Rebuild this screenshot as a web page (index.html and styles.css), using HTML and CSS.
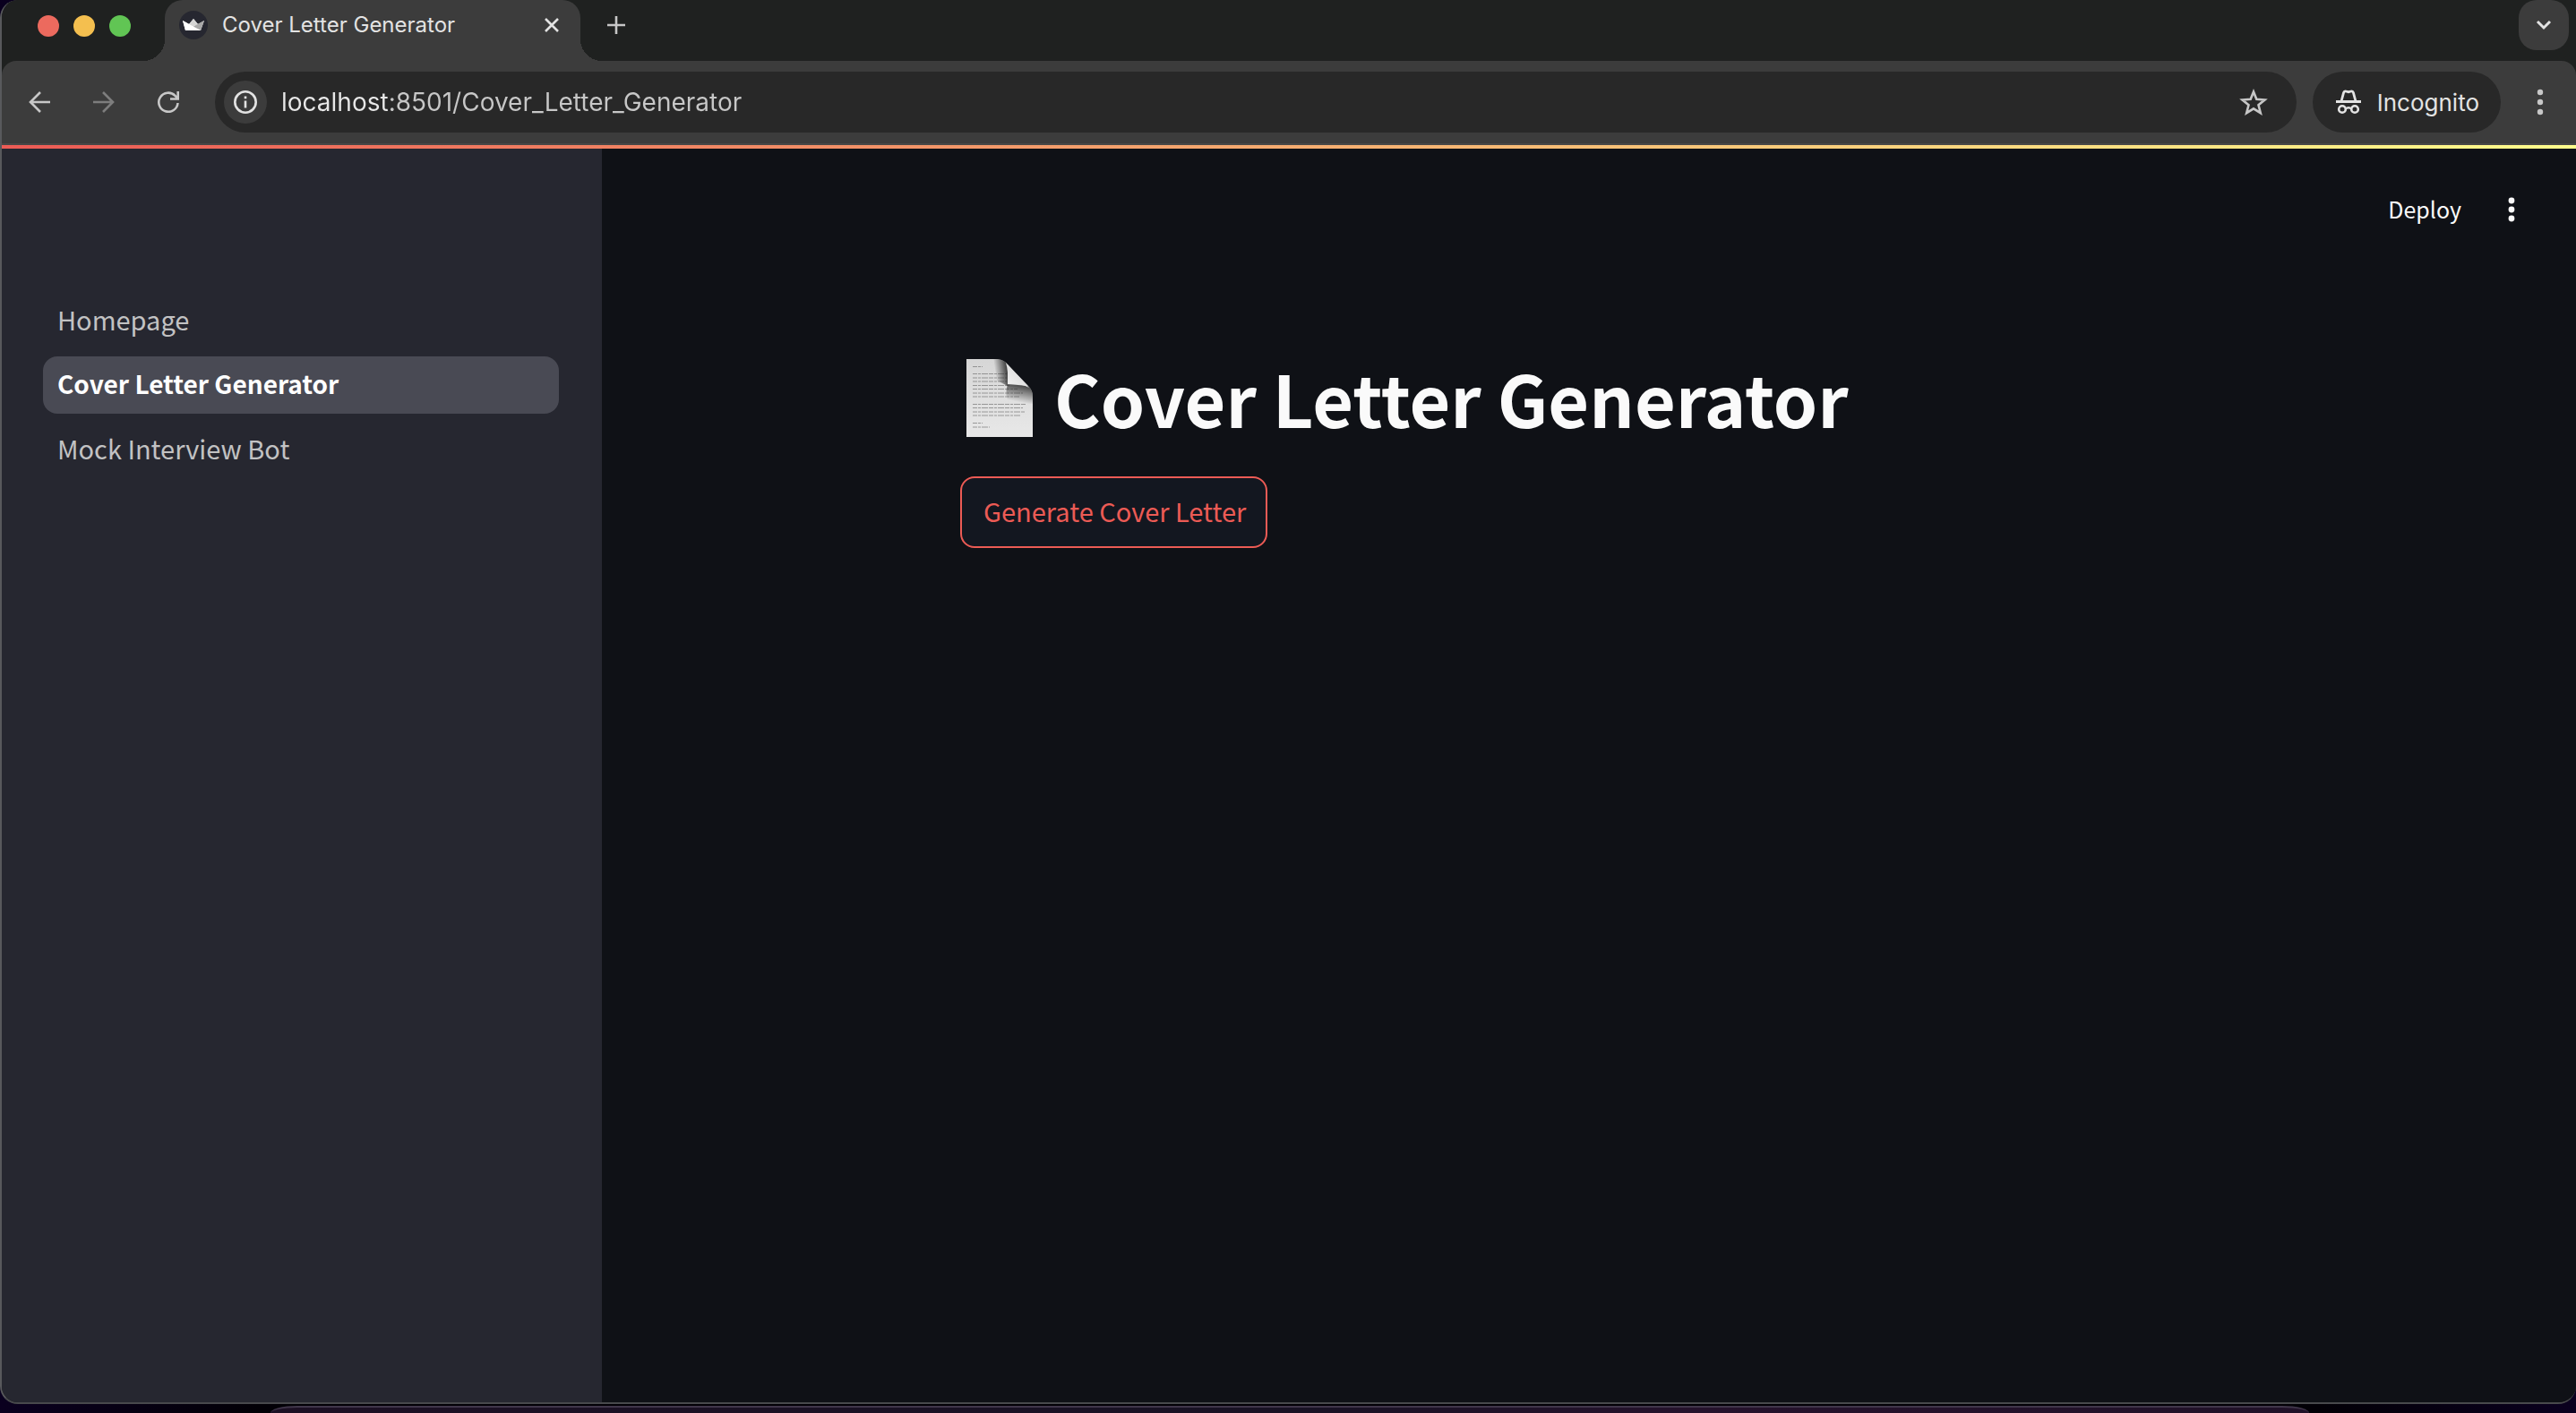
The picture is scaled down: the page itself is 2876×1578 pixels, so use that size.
FILE: index.html
```html
<!DOCTYPE html>
<html lang="en">
<head>
<meta charset="utf-8">
<title>Cover Letter Generator</title>
<link rel="stylesheet" href="styles.css">
</head>
<body>
<div class="window">
  <header class="tabstrip">
    <div class="lights">
      <span class="light light-close"></span>
      <span class="light light-min"></span>
      <span class="light light-max"></span>
    </div>
    <div class="tab">
      <svg class="favicon" viewBox="0 0 32 32" aria-hidden="true">
        <circle cx="16" cy="16" r="16" fill="#262730"/>
        <path d="M4 11l7 4 5-6 5 6 7-4-4 11H7z" fill="#fff"/>
        <path d="M16 9l5 6-7 3-3-3z" fill="#d5d5d5"/>
        <path d="M28 11l-13 7 9 4z" fill="#a8a8a8"/>
        <path d="M4 11l20 11H7z" fill="#fff"/>
      </svg>
      <span class="tab-title">Cover Letter Generator</span>
      <button class="icon-button tab-close" aria-label="Close tab">
        <svg width="16" height="16" viewBox="0 0 16 16"><path d="M1 1l14 14M15 1L1 15" stroke="#e3e3e3" stroke-width="2.6"/></svg>
      </button>
    </div>
    <button class="icon-button new-tab" aria-label="New tab">
      <svg width="20" height="20" viewBox="0 0 20 20"><path d="M10 0v20M0 10h20" stroke="#c7c7c7" stroke-width="2.6"/></svg>
    </button>
    <button class="icon-button tab-search" aria-label="Search tabs">
      <svg width="18" height="12" viewBox="0 0 18 12"><path d="M2 2l7 7 7-7" fill="none" stroke="#e3e3e3" stroke-width="3"/></svg>
    </button>
  </header>

  <div class="toolbar">
    <div class="nav-buttons">
      <button class="icon-button" aria-label="Back">
        <svg width="24" height="24" viewBox="0 0 24 24"><path d="M24 12H2M13 1L2 12l11 11" fill="none" stroke="#c7c7c7" stroke-width="2.6"/></svg>
      </button>
      <button class="icon-button" aria-label="Forward">
        <svg width="24" height="24" viewBox="0 0 24 24"><path d="M0 12h22M11 1l11 11-11 11" fill="none" stroke="#7d7d7d" stroke-width="2.6"/></svg>
      </button>
      <button class="icon-button" aria-label="Reload">
        <svg width="24" height="24" viewBox="0 0 24 24"><path d="M22.500 13A10.600 10.600 0 1 1 19.500 4.800L22.500 8M22.700 0v8.500h-8.700" fill="none" stroke="#c7c7c7" stroke-width="2.6"/></svg>
      </button>
    </div>
    <div class="address">
      <button class="icon-button site-info" aria-label="Site information">
        <svg width="26" height="26" viewBox="0 0 26 26"><circle cx="13" cy="13" r="11.700" fill="none" stroke="#e3e3e3" stroke-width="2.600"/><path d="M13 11.500v8M13 6.500v2.700" stroke="#e3e3e3" stroke-width="2.600"/></svg>
      </button>
      <input class="url" type="text" aria-label="Address" value="localhost:8501/Cover_Letter_Generator">
      <button class="icon-button bookmark" aria-label="Bookmark this page">
        <svg width="32" height="30" viewBox="0 0 32 30"><path d="M16 3.500l3.300 8.300 9.200.7-7 5.700 2.300 9-7.800-4.900-7.800 4.900 2.300-9-7-5.700 9.200-.7z" fill="none" stroke="#c7c7c7" stroke-width="2.600"/></svg>
      </button>
    </div>
    <button class="incognito">
      <svg width="28" height="28" viewBox="0 0 28 28" aria-hidden="true">
        <path d="M0 13.500h28" stroke="#e3e3e3" stroke-width="3"/>
        <path d="M6 13l2.600-9.500Q9.200 1.500 11.200 2L14 2.700 16.800 2Q18.800 1.500 19.400 3.500L22 13" fill="none" stroke="#e3e3e3" stroke-width="2.800"/>
        <circle cx="7" cy="22" r="3.800" fill="none" stroke="#e3e3e3" stroke-width="2.600"/>
        <circle cx="21" cy="22" r="3.800" fill="none" stroke="#e3e3e3" stroke-width="2.600"/>
        <path d="M10.500 21.500Q14 19 17.500 21.500" fill="none" stroke="#e3e3e3" stroke-width="2.600"/>
      </svg>
      <span>Incognito</span>
    </button>
    <button class="icon-button browser-menu" aria-label="Browser menu">
      <svg width="8" height="30" viewBox="0 0 8 30" fill="#c7c7c7"><circle cx="4" cy="4" r="3.200"/><circle cx="4" cy="15" r="3.200"/><circle cx="4" cy="26" r="3.200"/></svg>
    </button>
  </div>

  <div class="decoration"></div>

  <div class="app">
    <nav class="sidebar" aria-label="Pages">
      <a class="page-link" href="#home">Homepage</a>
      <a class="page-link page-link-active" href="#cover" aria-current="page">Cover Letter Generator</a>
      <a class="page-link" href="#mock">Mock Interview Bot</a>
    </nav>
    <main class="main">
      <div class="app-bar">
        <button class="deploy">Deploy</button>
        <button class="icon-button app-menu" aria-label="App menu">
          <svg width="8" height="28" viewBox="0 0 8 28" fill="#fafafa"><circle cx="4" cy="4" r="3.400"/><circle cx="4" cy="14" r="3.400"/><circle cx="4" cy="24" r="3.400"/></svg>
        </button>
      </div>
      <div class="content">
        <h1 class="title">
          <svg class="page-icon" width="74" height="87" viewBox="0 0 74 87" aria-hidden="true">
            <defs>
              <linearGradient id="paper" x1="0" y1="0" x2="0" y2="1"><stop offset="0" stop-color="#d6d6d6"/><stop offset="1" stop-color="#e8e8e8"/></linearGradient>
              <linearGradient id="curl" x1="0" y1="1" x2="1" y2="0"><stop offset="0" stop-color="#f4f4f4"/><stop offset=".5" stop-color="#e2e2e2"/><stop offset="1" stop-color="#aaa"/></linearGradient>
              <linearGradient id="shade-left" gradientUnits="userSpaceOnUse" x1="46" y1="14" x2="32" y2="16"><stop offset="0" stop-color="#222" stop-opacity=".85"/><stop offset="1" stop-color="#222" stop-opacity="0"/></linearGradient>
              <linearGradient id="shade-below" gradientUnits="userSpaceOnUse" x1="62" y1="28" x2="58" y2="48"><stop offset="0" stop-color="#222" stop-opacity=".85"/><stop offset="1" stop-color="#222" stop-opacity="0"/></linearGradient>
              <path id="sheet" d="M0 0h35Q42 1 46 6L69 30Q74 35 74 42V87H0z"/>
            </defs>
            <use href="#sheet" fill="url(#paper)"/>
            <g stroke="#666" stroke-width="1" stroke-dasharray="5 1 3 1 7 1" opacity=".6">
              <path d="M7 8.500h11M7 16.500h38M7 21h38M7 25h38M7 29.500h42M7 33.500h50M7 38h56M7 42h52M7 50.500h59M7 54.500h56M7 59h58M7 63h54M7 71.500h11M7 76h19"/>
            </g>
            <path d="M30 0h5Q42 1 46 6V30L34 24z" fill="url(#shade-left)"/>
            <path d="M46 28L69 30Q74 35 74 42V50H48Q42 40 46 28z" fill="url(#shade-below)"/>
            <path d="M44 4Q47 14 46 28Q60 27 70 32z" fill="url(#curl)"/>
          </svg>
          <span>Cover Letter Generator</span>
        </h1>
        <button class="generate">Generate Cover Letter</button>
      </div>
    </main>
  </div>
</div>
<div class="dock"></div>
</body>
</html>
```

FILE: styles.css
```css
* { box-sizing: border-box; }

body {
  display: flex;
  flex-direction: column;
  gap: 2px;
  height: 100vh;
  margin: 0;
  overflow: hidden;
  background: linear-gradient(90deg, #0a001f, #020006 10%, #020006 90%, #0a001f);
  font-family: "Noto Sans CJK SC", "Noto Sans", sans-serif;
}

button {
  margin: 0;
  padding: 0;
  border: 0;
  background: none;
  color: inherit;
  font: inherit;
}

svg { display: block; flex: none; }

.icon-button {
  display: flex;
  flex: none;
  align-items: center;
  justify-content: center;
}

.window {
  display: flex;
  flex: 1;
  flex-direction: column;
  overflow: hidden;
  border-bottom: 2px solid #48494c;
  border-left: 2px solid #58595c;
  border-radius: 20px;
  border-top-right-radius: 0;
  background: #1f2120;
}

/* Tab strip */
.tabstrip {
  display: flex;
  align-items: flex-start;
  height: 68px;
  padding-right: 8px;
  background: #1f2120;
  font-family: Inter, sans-serif;
}

.lights {
  display: flex;
  gap: 16px;
  padding: 17px 38px 0 40px;
}

.light { width: 24px; height: 24px; border-radius: 50%; }
.light-close { background: #ec6a5e; }
.light-min { background: #f4bf4f; }
.light-max { background: #61c554; }

.tab {
  position: relative;
  display: flex;
  align-items: center;
  width: 464px;
  height: 68px;
  padding: 0 20px 12px 16px;
  border-radius: 20px 20px 0 0;
  background: #3c3c3c;
}

.tab::before,
.tab::after {
  content: "";
  position: absolute;
  bottom: 0;
  width: 24px;
  height: 24px;
}

.tab::before { right: 100%; background: radial-gradient(circle at 0 0, transparent 24px, #3c3c3c 24px); }
.tab::after { left: 100%; background: radial-gradient(circle at 100% 0, transparent 24px, #3c3c3c 24px); }

.favicon { width: 32px; height: 32px; }
.tab-title { flex: 1; margin-left: 16px; color: #e3e3e3; font-size: 24px; line-height: 32px; }
.tab-close { width: 24px; height: 24px; }
.new-tab { width: 56px; height: 56px; margin-left: 12px; }

.tab-search {
  width: 56px;
  height: 56px;
  margin-left: auto;
  border-radius: 20px;
  background: #3c3c3c;
}

/* Toolbar */
.toolbar {
  display: flex;
  align-items: center;
  height: 94px;
  padding: 0 16px 0 30px;
  border-bottom: 2px solid #464646;
  border-radius: 16px 16px 0 0;
  background: #3c3c3c;
  font-family: Inter, sans-serif;
}

.nav-buttons { display: flex; gap: 48px; }

.address {
  display: flex;
  flex: 1;
  align-items: center;
  height: 68px;
  margin-left: 40px;
  padding: 0 32px 0 10px;
  border-radius: 34px;
  background: #282828;
}

.site-info { width: 48px; height: 48px; border-radius: 50%; background: #3c3c3c; }

.url {
  flex: 1;
  min-width: 0;
  height: 40px;
  margin: 0 16px;
  padding: 0;
  border: 0;
  outline: 0;
  /* The host name is brighter than the port and the path. */
  background: linear-gradient(90deg, #e8e8e8 120px, #c7c7c7 120px);
  background-clip: text;
  color: transparent;
  font-family: inherit;
  font-size: 28px;
}

.incognito {
  display: flex;
  align-items: center;
  gap: 18px;
  height: 68px;
  margin-left: 18px;
  padding: 0 24px 0 26px;
  border-radius: 34px;
  background: #282828;
  color: #e3e3e3;
  font-size: 26px;
}

.browser-menu { width: 48px; height: 48px; margin-left: 20px; }

.decoration { height: 4px; background: linear-gradient(90deg, #ec5b55, #fffd8c); }

/* Application */
.app { display: flex; flex: 1; min-height: 0; }

.sidebar {
  display: flex;
  flex-direction: column;
  gap: 8px;
  width: 670px;
  padding: 160px 48px 0 46px;
  background: #262730;
}

.page-link {
  height: 64px;
  padding: 0 16px;
  border-radius: 16px;
  color: #c2c2c3;
  font-size: 29px;
  line-height: 60px;
  text-decoration: none;
}

.page-link-active { background: #494a54; color: #fff; font-size: 28px; font-weight: 700; }

.main { flex: 1; background: #0f1116; }

.app-bar {
  display: flex;
  align-items: center;
  justify-content: flex-end;
  gap: 32px;
  height: 120px;
  padding: 16px 48px 0 0;
}

.deploy { padding-bottom: 2px; color: #fafafa; font-size: 25px; line-height: 40px; }
.app-menu { width: 48px; height: 48px; }

.content { max-width: 1404px; margin: 0 auto; padding-top: 102px; }

.title {
  display: flex;
  align-items: center;
  gap: 24px;
  margin: 0;
  padding-left: 7px;
  color: #fafafa;
  font-size: 79px;
  font-weight: 700;
  line-height: 112px;
}

.generate {
  height: 80px;
  margin-top: 32px;
  padding: 0 22px 4px 24px;
  border: 2px solid #ec5b55;
  border-radius: 16px;
  background: #131720;
  color: #ec5b55;
  font-size: 29px;
}

/* Top edge of the dock, at the foot of the screen */
.dock {
  flex: none;
  height: 8px;
  margin: 0 298px 0 302px;
  border-top: 2px solid #40364a;
  border-radius: 30px 30px 0 0 / 8px 8px 0 0;
  background: linear-gradient(90deg, #1c1024, #181224 50%, #25122c 70%, #201128);
}
```
